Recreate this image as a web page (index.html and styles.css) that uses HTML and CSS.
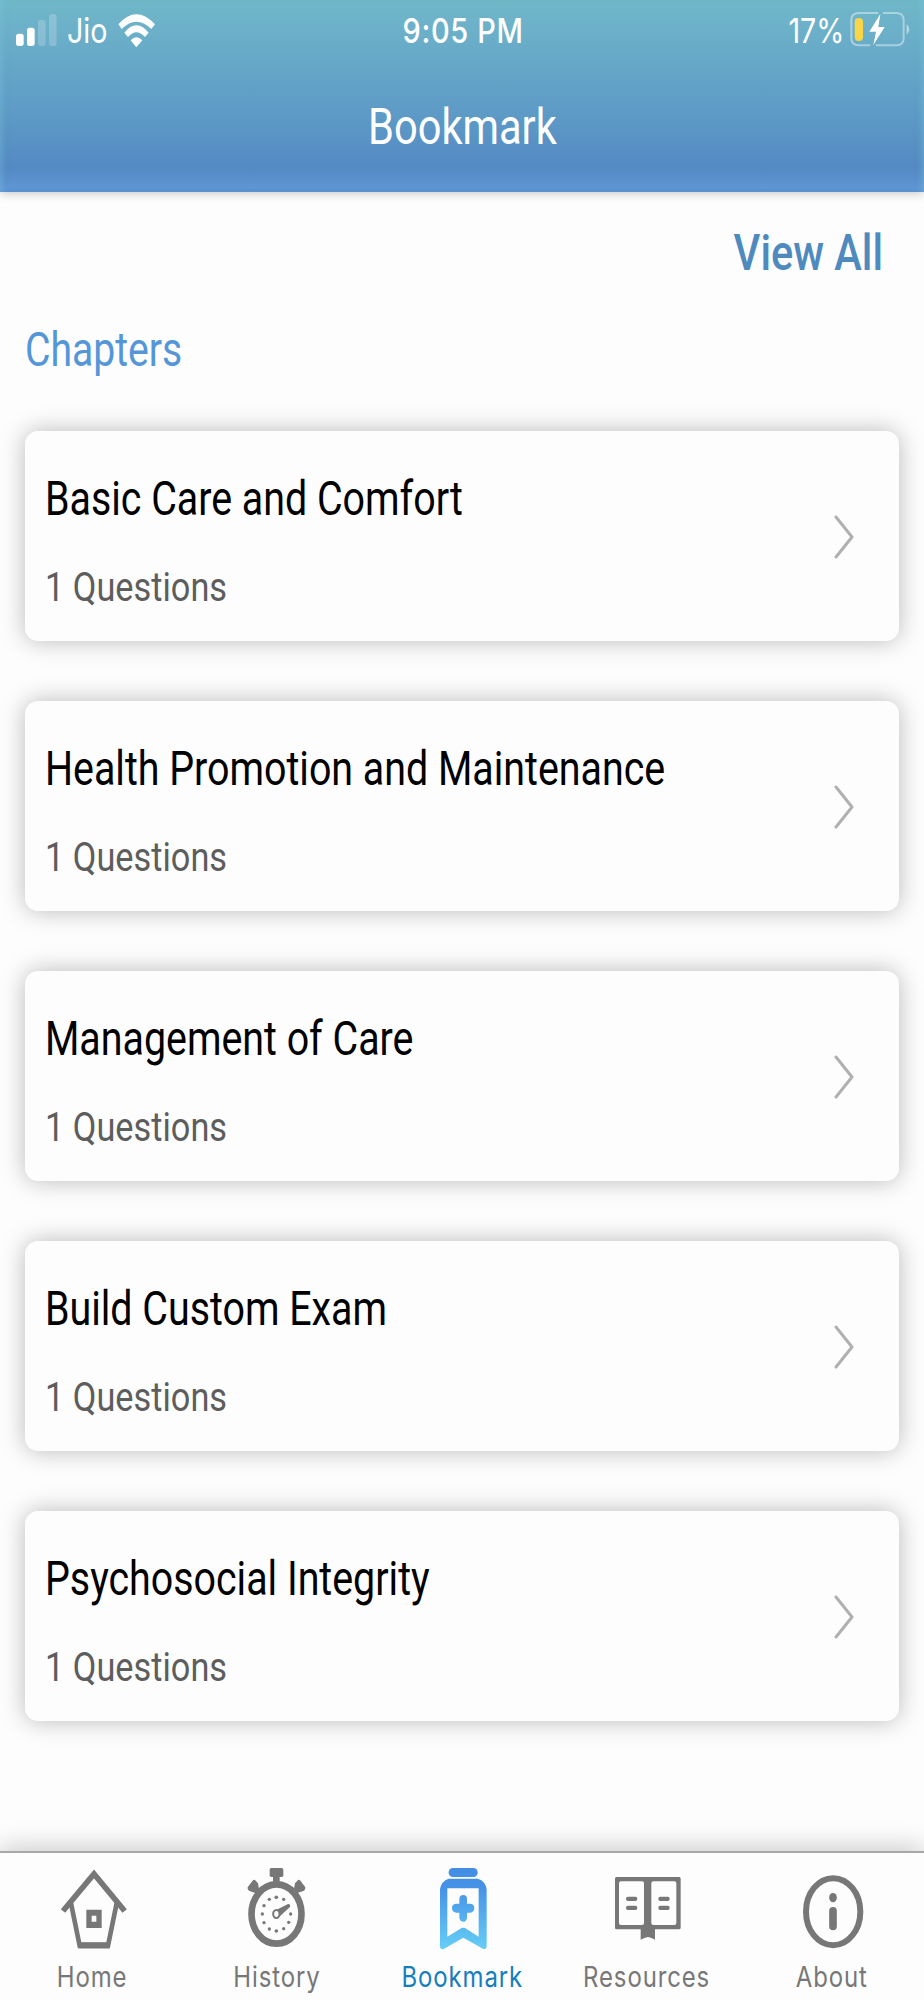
FILE: index.html
```html
<!DOCTYPE html>
<html lang="en">
<head>
<meta charset="utf-8">
<title>Bookmark</title>
<link rel="stylesheet" href="styles.css">
</head>
<body>
<div class="app">
  <header class="header">
    <div class="status">
      <div class="status-left">
        <svg class="signal" viewBox="0 0 123 96"><rect x="0" y="59" width="23" height="37" rx="8" fill="#fff"/><rect x="33" y="41" width="23" height="55" rx="8" fill="#fff"/><rect x="66" y="18" width="23" height="78" rx="8" fill="#fff" opacity=".2"/><rect x="99" y="0" width="23" height="96" rx="8" fill="#fff" opacity=".2"/></svg>
        <span class="carrier"><span class="t">Jio</span></span>
        <svg class="wifi" viewBox="353 41 111 100" fill="#fff"><path d="M354 72Q408 12 464 72L453 86Q408 42 364 86Z"/><path d="M372 97Q408 53 445 97L434 110Q408 81 383 110Z"/><path d="M391 120Q408 101 426 120L408 141Z"/></svg>
      </div>
      <div class="time"><span class="t">9:05 PM</span></div>
      <div class="status-right">
        <span class="percent"><span class="t">17%</span></span>
        <svg class="battery" viewBox="513 36 180 106"><path d="M598 39H538Q517 40 517 60V116Q518 135 538 136H574M612 39H654Q674 41 674 60V116Q673 135 654 136H590" fill="none" stroke="#fff" stroke-opacity=".42" stroke-width="6"/><path d="M683 72Q691 78 691 88T683 104Z" fill="#fff" fill-opacity=".5"/><rect x="527" y="54" width="25" height="69" rx="12" fill="#f8d648"/><path d="M604 42L571 95H591L583 135L617 81H598Z" fill="#fff"/></svg>
      </div>
    </div>
    <h1 class="title"><span class="t">Bookmark</span></h1>
  </header>

  <main class="content">
    <a class="view-all"><span class="t">View All</span></a>
    <h2 class="section"><span class="t">Chapters</span></h2>
    <div class="cards">
      <article class="card"><div><h3 class="name"><span class="t">Basic Care and Comfort</span></h3><p class="count"><span class="t">1 Questions</span></p></div><svg class="chevron" viewBox="0 0 20 44"><path d="M2 2L18 22L2 42"/></svg></article>
      <article class="card"><div><h3 class="name"><span class="t">Health Promotion and Maintenance</span></h3><p class="count"><span class="t">1 Questions</span></p></div><svg class="chevron" viewBox="0 0 20 44"><path d="M2 2L18 22L2 42"/></svg></article>
      <article class="card"><div><h3 class="name"><span class="t">Management of Care</span></h3><p class="count"><span class="t">1 Questions</span></p></div><svg class="chevron" viewBox="0 0 20 44"><path d="M2 2L18 22L2 42"/></svg></article>
      <article class="card"><div><h3 class="name"><span class="t">Build Custom Exam</span></h3><p class="count"><span class="t">1 Questions</span></p></div><svg class="chevron" viewBox="0 0 20 44"><path d="M2 2L18 22L2 42"/></svg></article>
      <article class="card"><div><h3 class="name"><span class="t">Psychosocial Integrity</span></h3><p class="count"><span class="t">1 Questions</span></p></div><svg class="chevron" viewBox="0 0 20 44"><path d="M2 2L18 22L2 42"/></svg></article>
    </div>
  </main>

  <nav class="tabs">
    <a class="tab">
      <svg class="icon" viewBox="127 60 300 300" fill="none" stroke="#777"><path d="M190 213L283 102L375 213" stroke-width="17"/><path d="M214 190L240 317H325L351 190" stroke-width="14"/><path d="M236 316H330" stroke-width="19"/><path d="M260 209H306V264H260ZM276 227V245H290V227Z" fill="#777" fill-rule="evenodd" stroke="none"/></svg>
      <span class="label"><span class="t">Home</span></span>
    </a>
    <a class="tab">
      <svg class="icon" viewBox="682 60 300 300" fill="#777"><rect x="810" y="84" width="41" height="27" rx="5"/><rect x="820" y="105" width="20" height="24"/><path d="M744 142L760 121Q764 117 768 122L775 130Q776 145 782 152L770 160L748 152Q743 148 744 142Z"/><path d="M917 142L901 121Q897 117 893 122L886 130Q885 145 879 152L891 160L913 152Q918 148 917 142Z"/><ellipse cx="830.500" cy="222" rx="75" ry="89" fill="none" stroke="#777" stroke-width="20"/><g><circle cx="830" cy="172" r="5.500"/><circle cx="852" cy="178" r="5"/><circle cx="809" cy="178" r="5"/><circle cx="793" cy="197" r="5"/><circle cx="788" cy="222" r="5"/><circle cx="793" cy="248" r="5"/><circle cx="809" cy="267" r="5"/><circle cx="830" cy="273" r="5.500"/><circle cx="852" cy="266" r="5"/><circle cx="867" cy="247" r="5"/><circle cx="873" cy="222" r="5"/></g><path d="M828 211L865 192Q873 191 871 201L839 230Z"/><ellipse cx="830" cy="222" rx="9.500" ry="12" fill="#fdfdfd" stroke="#777" stroke-width="6"/></svg>
      <span class="label"><span class="t">History</span></span>
    </a>
    <a class="tab active">
      <svg class="icon" viewBox="156 60 300 300"><defs><linearGradient id="ribbon" gradientUnits="userSpaceOnUse" x1="0" y1="84" x2="0" y2="328"><stop offset="0" stop-color="#438ee4"/><stop offset=".25" stop-color="#4692e7"/><stop offset="1" stop-color="#66cff5"/></linearGradient></defs><g fill="url(#ribbon)"><rect x="266" y="84" width="87" height="27" rx="13"/><path fill-rule="evenodd" d="M266 116H354Q376 123 380 148V320Q379 329 370 327L310 293L251 327Q241 330 240 319V148Q244 123 266 116ZM262 145V290L305 264Q310 262 315 264L356 290V145Z"/><path d="M298 177Q299 165 310 165T321 177V191H332Q343 193 343 204T332 218H321V233Q320 245 310 245T298 233V218H288Q276 216 276 204T288 191H298Z"/></g></svg>
      <span class="label"><span class="t">Bookmark</span></span>
    </a>
    <a class="tab">
      <svg class="icon" viewBox="711 60 300 300" fill="#777"><path fill-rule="evenodd" d="M769 111H958Q962 111 962 116V263Q962 268 957 268H885V299Q875 293 864 291Q853 293 842 299V268H770Q765 268 765 263V116Q765 111 769 111ZM783 124Q777 124 777 130V249Q777 255 783 255H846Q852 255 852 249V130Q852 124 846 124ZM880 124Q874 124 874 130V249Q874 255 880 255H943Q949 255 949 249V130Q949 124 943 124Z"/><rect x="798" y="170" width="34" height="13" rx="6"/><rect x="798" y="197" width="34" height="13" rx="6"/><rect x="895" y="170" width="34" height="13" rx="6"/><rect x="895" y="197" width="34" height="13" rx="6"/></svg>
      <span class="label"><span class="t">Resources</span></span>
    </a>
    <a class="tab">
      <svg class="icon" viewBox="426 60 300 300" fill="#777"><ellipse cx="579.500" cy="215" rx="81.500" ry="100.500" fill="none" stroke="#777" stroke-width="18"/><ellipse cx="579" cy="173" rx="11.500" ry="14"/><rect x="567.500" y="201" width="23" height="70" rx="11.500"/></svg>
      <span class="label"><span class="t">About</span></span>
    </a>
  </nav>
</div>
</body>
</html>
```
FILE: styles.css
```css
* { box-sizing: border-box; }
body { margin: 0; background: #fdfdfd; font-family: Roboto, "Liberation Sans", sans-serif; }
h1, h2, h3, p { margin: 0; font-weight: 400; }
svg { display: block; flex: none; }

.app { display: flex; flex-direction: column; width: 924px; height: 2000px; overflow: hidden; }

/* Condensed lettering: every text run is narrowed horizontally. */
.t { display: inline-block; white-space: nowrap; transform: scaleX(.82); transform-origin: left center; }

.header {
  height: 191.500px; flex: none; color: #fff;
  background: linear-gradient(#70b8c8 0, #6db2c9 22px, #5d9ac6 115px, #548ac3 168px, #5e95d4 188px, #5a92d2 100%);
  box-shadow: 0 2px 9px rgba(0, 0, 0, .2), inset 7px 0 7px -6px rgba(125, 195, 225, .5), inset -7px 0 7px -6px rgba(125, 195, 225, .5);
}
.status { display: grid; grid-template-columns: 1fr auto 1fr; height: 62px; padding: 0 14px 0 16px; font: 400 34.500px/62px Inter, sans-serif; }
.status-left { display: flex; }
.status-right { display: flex; justify-content: flex-end; }
.signal { width: 41px; height: 32px; margin-top: 13.500px; }
.carrier { width: 51px; margin-left: 10px; }
.carrier .t { transform: scaleX(.83); }
.wifi { width: 37px; height: 33.300px; margin-top: 13.700px; }
.time { font-weight: 500; }
.time .t { transform: scaleX(.84); transform-origin: center; letter-spacing: .8px; }
.percent .t { transform: scaleX(.83); transform-origin: right center; }
.battery { width: 60px; height: 35.300px; margin: 12px 0 0 6px; }
.title { font-size: 50px; line-height: 130px; text-align: center; }
.title .t { transform: scaleX(.832); transform-origin: center; }

.content { flex: 1; display: flex; flex-direction: column; padding: 31px 25px 0; }
.view-all { align-self: flex-end; padding-right: 16px; font-size: 50px; font-weight: 500; line-height: 60px; color: #4f8abf; }
.view-all .t { transform: scaleX(.83); transform-origin: right center; }
.section { margin-top: 39.500px; font-size: 48px; line-height: 56px; color: #5496d8; }
.section .t { transform: scaleX(.815); }
.cards { display: grid; gap: 60px; margin-top: 53px; }
.card {
  display: flex; align-items: flex-start; justify-content: space-between; height: 210px; padding: 40px 45px 0 20px;
  background: #fdfdfd; border-radius: 13px; box-shadow: 0 0 24px rgba(0, 0, 0, .27);
}
.name { font-size: 48px; line-height: 56px; color: #000; }
.count { margin-top: 35.500px; font-size: 41px; line-height: 48px; color: #5d5d5d; }
.count .t { transform: scaleX(.837); }
.chevron { width: 20px; height: 44px; margin-top: 43.500px; fill: none; stroke: #b0b0b0; stroke-width: 3; stroke-linecap: round; stroke-linejoin: round; }

.tabs {
  display: grid; grid-template-columns: repeat(5, 1fr); flex: none; height: 149px;
  background: #fdfdfd; border-top: 2px solid #a8a8a8; box-shadow: 0 -4px 24px rgba(0, 0, 0, .2);
}
.tab { display: flex; flex-direction: column; align-items: center; padding-top: 7px; color: #777; }
.tab.active { color: #167dbd; }
.icon { width: 100px; height: 100px; }
.label { font: 400 28.500px/34px Inter, sans-serif; }
.label .t { transform: scaleX(.84); transform-origin: center; letter-spacing: 1.050px; }
```
